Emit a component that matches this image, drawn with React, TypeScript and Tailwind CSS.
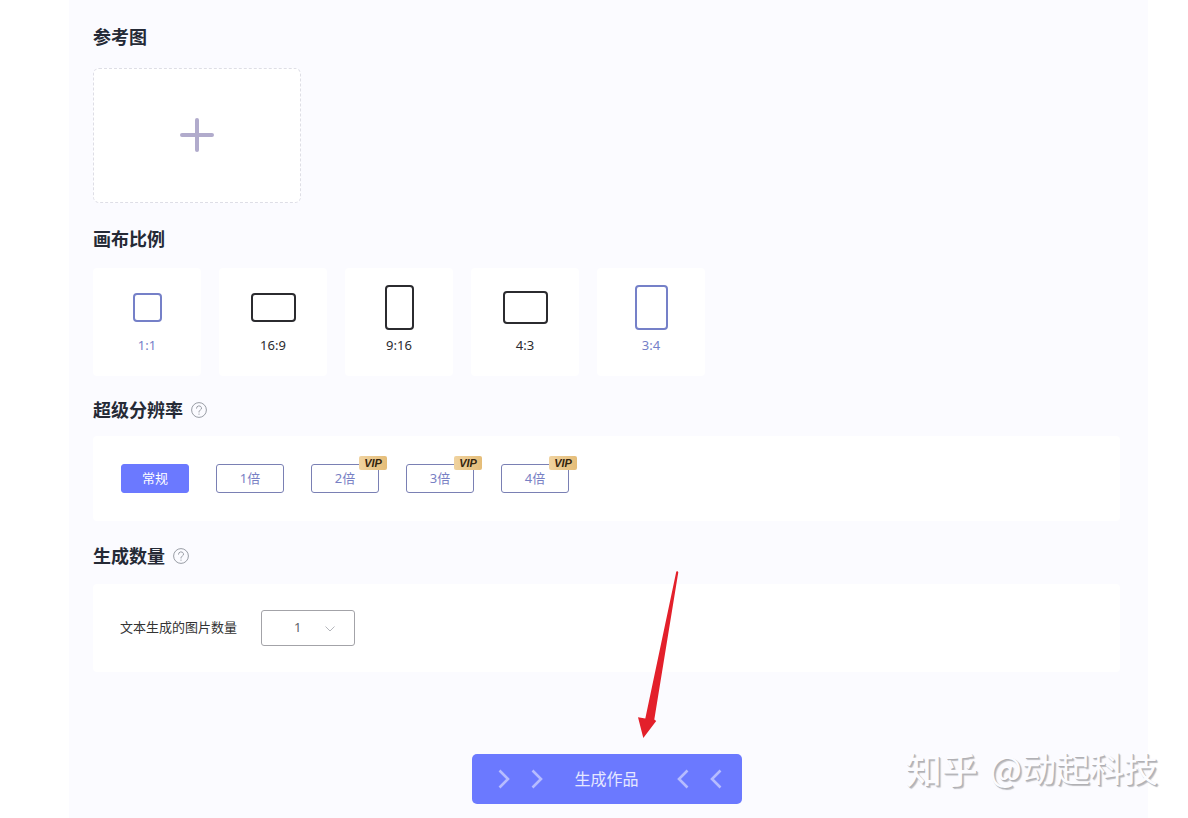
import { useState } from "react"
import type { ReactNode } from "react"

const RATIOS = [
  { label: "1:1", shape: "w-[29px] h-[29px]", accent: true },
  { label: "16:9", shape: "w-[45px] h-[29px]", accent: false },
  { label: "9:16", shape: "w-[29px] h-[45px]", accent: false },
  { label: "4:3", shape: "w-[45px] h-[33px]", accent: false },
  { label: "3:4", shape: "w-[33px] h-[45px]", accent: true },
]

const RESOLUTIONS = [
  { label: "常规", vip: false },
  { label: "1倍", vip: false },
  { label: "2倍", vip: true },
  { label: "3倍", vip: true },
  { label: "4倍", vip: true },
]

function SectionTitle({ children, help }: { children: ReactNode; help?: boolean }) {
  return (
    <div className="flex h-6 items-center gap-2">
      <h2 className="text-[18px] font-bold leading-6 text-[#252a36]">{children}</h2>
      {help && (
        <button type="button" aria-label="帮助" className="text-[#999da5]">
          <svg width="16" height="16" viewBox="0 0 16 16" fill="none" stroke="currentColor">
            <circle cx="8" cy="8" r="7.4" />
            <path d="M5.500 6.200a2.500 2.300 0 1 1 3.700 2c-.8.45-1.200.8-1.200 1.600v.3" strokeLinecap="round" />
            <circle cx="8" cy="12.100" r=".7" fill="currentColor" stroke="none" />
          </svg>
        </button>
      )}
    </div>
  )
}

function Chevron({ flip }: { flip?: boolean }) {
  return (
    <svg
      width="12"
      height="20"
      viewBox="0 0 12 20"
      fill="none"
      stroke="#b6bcff"
      strokeWidth="2.6"
      className={flip ? "rotate-180" : ""}
    >
      <path d="M1.5 1.5 10 10l-8.500 8.500" />
    </svg>
  )
}

export default function App() {
  const [ratio, setRatio] = useState("1:1")
  const [resolution, setResolution] = useState("常规")
  const [count, setCount] = useState("1")

  return (
    <div className="relative min-h-screen bg-white pl-[69px] pr-10 font-['Noto_Sans','Noto_Sans_CJK_SC',sans-serif]">
      <main className="min-h-screen bg-[#fbfbff] pt-[25px] pr-7 pb-3 pl-6">
        <section>
          <SectionTitle>参考图</SectionTitle>
          <button
            type="button"
            aria-label="上传参考图"
            className="mt-[19px] flex h-[135px] w-[208px] items-center justify-center rounded-md border border-dashed border-[#dedee6] bg-white pb-[2px]"
          >
            <svg width="34" height="34" viewBox="0 0 34 34" stroke="#b1abcc" strokeWidth="4" strokeLinecap="round">
              <path d="M17 2v30M2 17h30" />
            </svg>
          </button>
        </section>

        <section className="mt-6">
          <SectionTitle>画布比例</SectionTitle>
          <div className="mt-[17px] flex gap-[18px]">
            {RATIOS.map((item) => (
              <button
                key={item.label}
                type="button"
                aria-pressed={ratio === item.label}
                onClick={() => setRatio(item.label)}
                className={`flex h-[108px] w-[108px] flex-col items-center rounded bg-white pt-[17px] ${
                  item.accent ? "text-[#7580c8]" : "text-[#2b2b2f]"
                }`}
              >
                <span className="flex h-[45px] items-center">
                  <span className={`rounded-[4px] border-2 border-current ${item.shape}`} />
                </span>
                <span className="mt-[5px] text-[13px] leading-5">{item.label}</span>
              </button>
            ))}
          </div>
        </section>

        <section className="mt-[22px]">
          <SectionTitle help>超级分辨率</SectionTitle>
          <div className="mt-[14px] flex h-[85px] items-center gap-[27px] rounded bg-white px-7">
            {RESOLUTIONS.map((item) => (
              <button
                key={item.label}
                type="button"
                aria-pressed={resolution === item.label}
                onClick={() => setResolution(item.label)}
                className={`relative h-[29px] w-[68px] rounded-[3px] border pb-[2px] text-[13px] leading-5 ${
                  resolution === item.label
                    ? "border-[#6b79ff] bg-[#6b79ff] text-white"
                    : "border-[#7a80b4] bg-white text-[#7880c4]"
                }`}
              >
                {item.label}
                {item.vip && (
                  <span className="absolute -top-[9px] -right-[9px] h-[14px] w-7 rounded-[2px] bg-linear-to-r from-[#f0d3a0] to-[#e5bd78] font-['Liberation_Sans',sans-serif] text-[11px] font-bold italic leading-[14px] text-[#33240f]">
                    VIP
                  </span>
                )}
              </button>
            ))}
          </div>
        </section>

        <section className="mt-[23px]">
          <SectionTitle help>生成数量</SectionTitle>
          <div className="mt-4 flex h-[88px] items-center gap-6 rounded bg-white px-[27px]">
            <label htmlFor="count" className="pb-[2px] text-[13px] leading-5 text-[#333]">
              文本生成的图片数量
            </label>
            <div className="relative">
              <select
                id="count"
                value={count}
                onChange={(e) => setCount(e.target.value)}
                className="h-9 w-[94px] appearance-none rounded-[3px] border border-[#a3a3a8] bg-white pl-8 text-[13px] text-[#606266]"
              >
                <option>1</option>
                <option>2</option>
                <option>3</option>
                <option>4</option>
              </select>
              <svg
                width="10"
                height="6"
                viewBox="0 0 10 6"
                fill="none"
                stroke="#b4b6bc"
                className="pointer-events-none absolute top-4 right-5"
              >
                <path d="m.5.5 4.500 4.500L9.500.5" />
              </svg>
            </div>
          </div>
        </section>

        <div className="mt-[82px] flex justify-center">
          <button
            type="button"
            className="flex h-[50px] w-[270px] items-center rounded-[5px] bg-[#6b79ff] pl-[26px] text-[16px] text-[#e6e8ff]"
          >
            <span className="flex gap-[21px]">
              <Chevron />
              <Chevron />
            </span>
            <span className="mr-[38px] ml-8">生成作品</span>
            <span className="flex gap-[21px]">
              <Chevron flip />
              <Chevron flip />
            </span>
          </button>
        </div>
      </main>

      {/* arrow pointing at the submit button */}
      <svg
        width="44"
        height="170"
        viewBox="0 0 44 170"
        className="pointer-events-none absolute top-[570px] left-[636px]"
      >
        <path
          d="M40.300 1.500q1.700-1 2 .7L18.300 149.500l1.900 1.500L7.300 168 2 147.300l7.300 1.200z"
          fill="#e3202b"
        />
      </svg>

      <p className="pointer-events-none absolute right-[30px] bottom-[26px] flex items-center gap-3 font-['Noto_Sans_CJK_SC',sans-serif] text-[34px] leading-[48px] text-[#fcfcff] [text-shadow:1px_1px_0_#b0b0b4,2px_2px_1px_#bcbcc0]">
        <span className="text-[36px] font-medium">知乎</span>
        <span>@动起科技</span>
      </p>
    </div>
  )
}
